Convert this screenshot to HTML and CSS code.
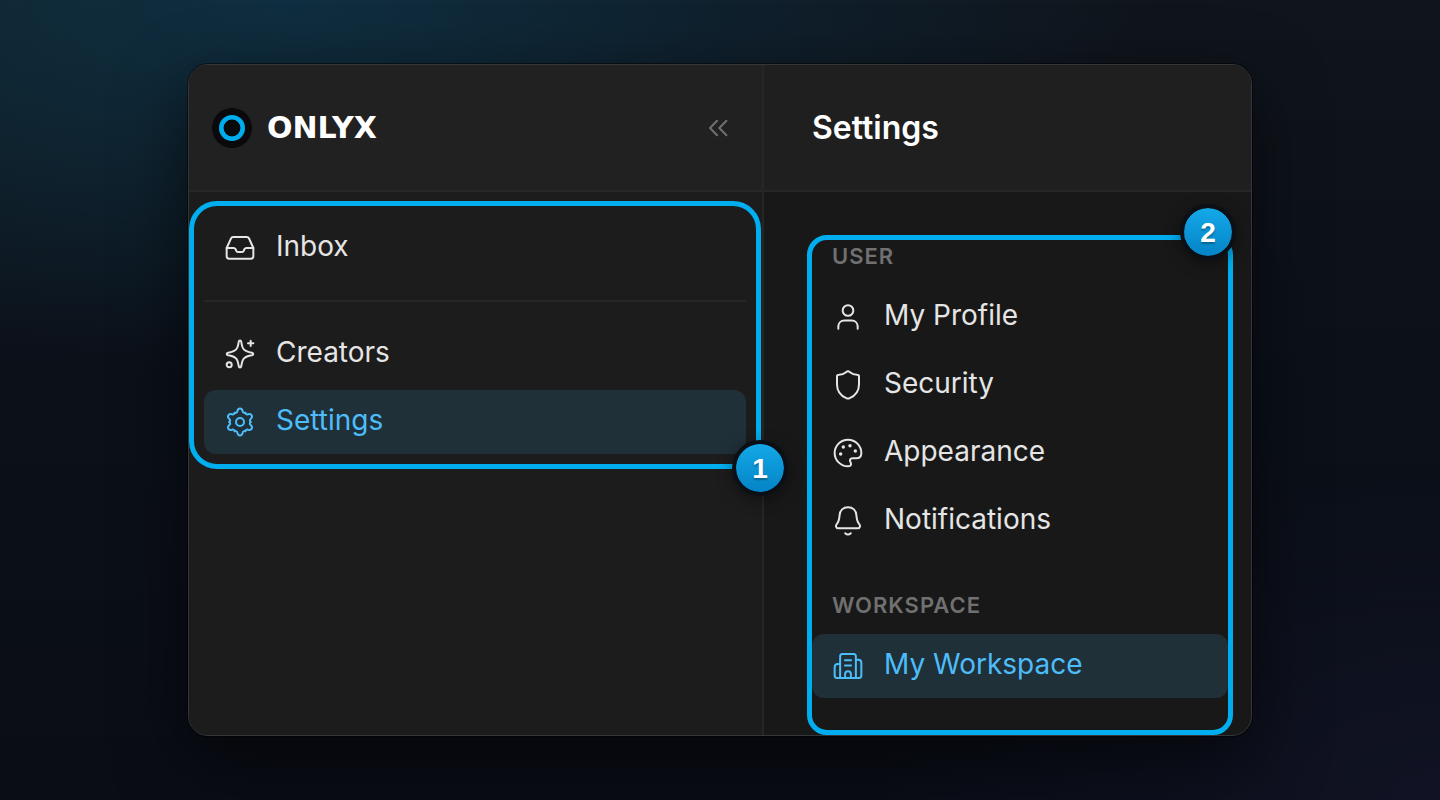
FILE: index.html
```html
<!DOCTYPE html>
<html lang="en">

<head>
    <meta charset="UTF-8">
    <meta name="viewport" content="width=device-width, initial-scale=1.0">
    <title>ONLYX - Settings</title>
    <link rel="stylesheet" href="styles.css">
</head>

<body>
    <div class="window">
        <aside class="sidebar">
            <header class="header sidebar-header">
                <a class="brand" href="#">
                    <svg class="brand-mark" viewBox="0 0 40 40" aria-hidden="true">
                        <circle cx="20" cy="20" r="20" fill="#0a0a0c" />
                        <circle cx="20" cy="20" r="10.7" fill="none" stroke="#00aeef" stroke-width="4.6" />
                    </svg>
                    <span class="brand-name">ONLYX</span>
                </a>
                <button class="collapse" type="button" aria-label="Collapse sidebar">
                    <svg class="icon" viewBox="0 0 24 24"><path d="M11.3 6.6 6 12l5.3 5.4M18.3 6.6 13 12l5.3 5.4" /></svg>
                </button>
            </header>

            <nav class="callout main-nav">
                <a class="item" href="#">
                    <svg class="icon" viewBox="0 0 24 24">
                        <path d="M2 12v6.2c0 1 .8 1.8 1.8 1.8h16.4c1 0 1.8-.8 1.8-1.8V12l-3.2-7.1c-.3-.7-.9-1.15-1.7-1.15H6.9c-.8 0-1.4.45-1.7 1.15z" />
                        <path d="M2 12h5.3c.6 0 1 .3 1.3.8l.7 1.4c.3.5.7.8 1.3.8h2.8c.6 0 1-.3 1.3-.8l.7-1.4c.3-.5.7-.8 1.3-.8H22" />
                    </svg>
                    <span class="item-text">Inbox</span>
                </a>
                <hr class="divider">
                <a class="item" href="#">
                    <svg class="icon" viewBox="0 0 24 24">
                        <path d="M11 3c.3-1.4 1.7-1.4 2 0 .7 5.6 2.1 7 7.9 8 1.4.3 1.4 1.7 0 2-5.8 1-7.2 2.4-7.9 8-.3 1.4-1.7 1.4-2 0-.7-5.6-2.1-7-7.9-8-1.4-.3-1.4-1.7 0-2 5.8-1 7.2-2.4 7.9-8z" />
                        <path d="M20 2v4M18 4h4" />
                        <circle cx="3.9" cy="20" r="1.9" />
                    </svg>
                    <span class="item-text">Creators</span>
                </a>
                <a class="item active" href="#" aria-current="page">
                    <svg class="icon" viewBox="0 0 24 24">
                        <g id="teeth">
                            <path id="tooth" d="M8 5.07C9 5.4 9.8 5 10 3.9 10.3 2.5 10.7 1.9 12 1.9s1.7.6 2 2c.2 1.1 1 1.5 2 1.17" />
                            <use href="#tooth" transform="rotate(60 12 12)" />
                            <use href="#tooth" transform="rotate(120 12 12)" />
                        </g>
                        <use href="#teeth" transform="rotate(180 12 12)" />
                        <circle cx="12" cy="12" r="3" />
                    </svg>
                    <span class="item-text">Settings</span>
                </a>
                <span class="badge badge-one">1</span>
            </nav>
        </aside>

        <main class="panel">
            <header class="header panel-header">
                <h1 class="title">Settings</h1>
            </header>

            <nav class="callout settings-nav">
                <h2 class="label">USER</h2>
                <a class="item" href="#">
                    <svg class="icon" viewBox="0 0 24 24">
                        <circle cx="12" cy="7.1" r="4" />
                        <path d="M4.75 20.9v-1.7c0-2.5 1.7-4.5 4.5-4.5h5.5c2.8 0 4.5 2 4.5 4.5v1.7" />
                    </svg>
                    <span class="item-text">My Profile</span>
                </a>
                <a class="item" href="#">
                    <svg class="icon" viewBox="0 0 24 24">
                        <path d="M12 1.75c.6 0 1 .3 1.5.7 1.6 1.3 3.3 1.8 5.3 1.9.8 0 1.45.6 1.45 1.4v5.75c0 5.6-3.4 8.9-7 10.4-.8.4-1.7.4-2.5 0-3.6-1.5-7-4.8-7-10.4V5.75c0-.8.65-1.4 1.45-1.4 2-.1 3.7-.6 5.3-1.9.5-.4.9-.7 1.5-.7z" />
                    </svg>
                    <span class="item-text">Security</span>
                </a>
                <a class="item" href="#">
                    <svg class="icon" viewBox="0 0 24 24">
                        <path d="M22 12c0-5.5-4.5-10-10-10S2 6.5 2 12s4.5 10 10 10c1.7 0 2.6-.9 2.2-2.2-.3-1-.9-1.6-.7-2.5.2-.9 1-1.3 2-1.3h2.7c2.5 0 3.8-1.5 3.8-4z" />
                        <g class="dots">
                            <circle cx="6.5" cy="12.7" r="1.3" />
                            <circle cx="8.5" cy="7.5" r="1.3" />
                            <circle cx="13.5" cy="6.5" r="1.3" />
                            <circle cx="17.5" cy="10.5" r="1.3" />
                        </g>
                    </svg>
                    <span class="item-text">Appearance</span>
                </a>
                <a class="item" href="#">
                    <svg class="icon" viewBox="0 0 24 24">
                        <path d="M12 1.75c-3.7 0-6 2.4-6.3 5.9-.2 3-.4 4.5-2 6.5-.7.8-.9 1.5-.6 2.2.3.8.9 1.15 1.7 1.15h14.4c.8 0 1.4-.35 1.7-1.15.3-.7.1-1.4-.6-2.2-1.6-2-1.8-3.5-2-6.5-.3-3.5-2.6-5.9-6.3-5.9z" />
                        <path d="M9.9 21.2c.6.6 1.3 1 2.1 1s1.5-.4 2.1-1" />
                    </svg>
                    <span class="item-text">Notifications</span>
                </a>

                <h2 class="label label-next">WORKSPACE</h2>
                <a class="item active" href="#" aria-current="page">
                    <svg class="icon" viewBox="0 0 24 24">
                        <path d="M6.1 21V4.8c0-1.1.7-1.8 1.8-1.8h8.2c1.1 0 1.8.7 1.8 1.8V21" />
                        <path d="M6.1 10.5H4.4c-1.6 0-2.4.9-2.4 2.4v6.2c0 1.2.7 1.9 1.9 1.9h16.2c1.2 0 1.9-.7 1.9-1.9V9.8c0-1.5-.8-2.4-2.4-2.4h-1.7" />
                        <path d="M9.7 7.6h4.6M9.7 11.6h4.6M9.8 21v-2.8c0-1.3.8-2.2 2.2-2.2s2.2.9 2.2 2.2V21" />
                    </svg>
                    <span class="item-text">My Workspace</span>
                </a>
                <span class="badge badge-two">2</span>
            </nav>
        </main>
    </div>
</body>

</html>
```
FILE: styles.css
```css
* {
    box-sizing: border-box;
}

body {
    display: flex;
    justify-content: center;
    min-height: 100vh;
    margin: 0;
    padding: 64px;
    font-family: Inter, 'Liberation Sans', sans-serif;
    color: #e5e5e5;
    background:
        radial-gradient(ellipse 60% 45% at 20% 0%, rgba(14, 60, 86, 0.6), transparent),
        radial-gradient(ellipse 50% 45% at 0% 0%, rgba(20, 60, 60, 0.2), transparent),
        radial-gradient(ellipse 40% 40% at 100% 100%, rgba(26, 28, 56, 0.4), transparent),
        linear-gradient(#10151c, #0b1019 50%, #0a0d16);
}

/* Layout */
.window {
    display: grid;
    grid-template-columns: 575fr 487fr;
    width: 100%;
    max-width: 1064px;
    border: 1px solid #353637;
    border-radius: 20px;
    overflow: hidden;
    background-color: #181818;
    box-shadow: 0 0 0 1px rgba(0, 0, 0, 0.5), 0 24px 70px rgba(0, 0, 0, 0.6);
}

.sidebar,
.panel {
    display: flex;
    flex-direction: column;
}

.sidebar {
    background-color: #1c1c1c;
    border-right: 2px solid #262626;
}

.header {
    display: flex;
    align-items: center;
    height: 127px;
    border-bottom: 2px solid #272727;
}

.sidebar-header {
    justify-content: space-between;
    padding: 0 28px 0 23px;
    background-color: #212121;
}

.panel-header {
    padding: 0 48px;
    background-color: #1f1f1f;
}

.brand {
    display: flex;
    align-items: center;
    gap: 15px;
    color: #fff;
    text-decoration: none;
}

.brand-mark {
    width: 40px;
    height: 40px;
}

.brand-name {
    font-family: 'DejaVu Sans', sans-serif;
    font-size: 30px;
    font-weight: 700;
    line-height: 40px;
}

.collapse {
    display: flex;
    padding: 0;
    border: none;
    background: none;
    color: #707070;
    cursor: pointer;
}

.title {
    margin: 0;
    font-size: 32px;
    font-weight: 600;
    line-height: 40px;
    color: #fff;
}

/* Highlighted areas with a numbered badge */
.callout {
    position: relative;
    border: 5px solid #00aeef;
}

.main-nav {
    margin: 9px 1px 0 0;
    padding: 10px;
    border-radius: 28px;
}

.settings-nav {
    flex: 1;
    margin: 43px 18px 0 43px;
    padding: 4px 0 32px;
    border-radius: 20px;
}

.badge {
    position: absolute;
    width: 56px;
    height: 56px;
    border: 4px solid #0b1017;
    border-radius: 50%;
    background: linear-gradient(#14a8e8, #0484c6) padding-box;
    box-shadow: 0 4px 16px rgba(0, 0, 0, 0.4);
    color: #fff;
    font-family: 'Liberation Sans', sans-serif;
    font-size: 28px;
    font-weight: 700;
    line-height: 50px;
    text-align: center;
    text-shadow: 0 2px 2px rgba(0, 0, 0, 0.3);
}

.badge-one {
    right: -32px;
    bottom: -32px;
}

.badge-two {
    top: -36px;
    right: -8px;
}

/* Menu items */
.item {
    display: flex;
    align-items: center;
    gap: 20px;
    height: 64px;
    padding: 0 20px;
    border-radius: 12px;
    color: #e5e5e5;
    font-size: 28px;
    line-height: 36px;
    text-decoration: none;
}

.item + .item {
    margin-top: 4px;
}

.item-text {
    padding-bottom: 4px;
}

.item.active {
    background-color: #203038;
    color: #4dbdfa;
}

.divider {
    height: 2px;
    margin: 20px 0;
    border: none;
    background-color: #262626;
}

.label {
    margin: 0 20px 17px;
    color: #707070;
    font-size: 22px;
    font-weight: 600;
    line-height: 24px;
    letter-spacing: 1px;
}

.label-next {
    margin-top: 40px;
}

.icon {
    flex: none;
    width: 32px;
    height: 32px;
    fill: none;
    stroke: currentColor;
    stroke-width: 1.5;
    stroke-linecap: round;
    stroke-linejoin: round;
}

.dots {
    fill: currentColor;
    stroke: none;
}
```
